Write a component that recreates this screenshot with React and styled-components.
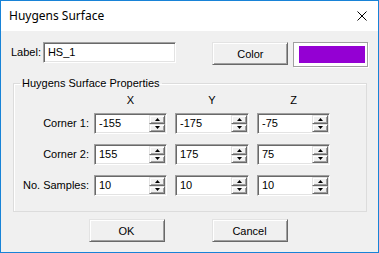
import React from 'react'
import styled, { createGlobalStyle } from 'styled-components'

const GlobalStyle = createGlobalStyle`
    html, body {
        margin: 0;
        padding: 0;
        background: #f0f0f0;
    }
    * {
        box-sizing: border-box;
    }
`

const rows = [
    { label: 'Corner 1:', values: ['-155', '-175', '-75'] },
    { label: 'Corner 2:', values: ['155', '175', '75'] },
    { label: 'No. Samples:', values: ['10', '10', '10'] },
]

function SpinBox(props) {
    return (
        <SpinFrame>
            <SpinText>{props.value}</SpinText>
            <SpinButtons>
                <SpinButton>
                    <svg width="5" height="3" viewBox="0 0 5 3">
                        <path d="M2.5 0 L5 3 L0 3 Z" fill="#000" />
                    </svg>
                </SpinButton>
                <SpinButton>
                    <svg width="5" height="3" viewBox="0 0 5 3">
                        <path d="M0 0 L5 0 L2.5 3 Z" fill="#000" />
                    </svg>
                </SpinButton>
            </SpinButtons>
        </SpinFrame>
    )
}

function App() {
    return (
        <Window>
            <GlobalStyle />
            <TitleBar>
                <Title>Huygens Surface</Title>
                <CloseButton>
                    <svg width="10" height="10" viewBox="0 0 10 10">
                        <path d="M0.5 0.5 L9.5 9.5 M9.5 0.5 L0.5 9.5" stroke="#000" strokeWidth="1" />
                    </svg>
                </CloseButton>
            </TitleBar>

            <Body>
                <TopRow>
                    <LabelText>Label:</LabelText>
                    <TextField>HS_1</TextField>
                    <ColorButton>Color</ColorButton>
                    <Swatch>
                        <SwatchFill color="#9400d3" />
                    </Swatch>
                </TopRow>

                <GroupBox>
                    <Legend>Huygens Surface Properties</Legend>
                    <Grid>
                        <span />
                        <ColHeader>X</ColHeader>
                        <ColHeader>Y</ColHeader>
                        <ColHeader>Z</ColHeader>
                        {rows.map(row => (
                            <React.Fragment key={row.label}>
                                <RowLabel>{row.label}</RowLabel>
                                {row.values.map((v, i) => (
                                    <SpinBox key={i} value={v} />
                                ))}
                            </React.Fragment>
                        ))}
                    </Grid>
                </GroupBox>

                <ButtonRow>
                    <PushButton>OK</PushButton>
                    <PushButton>Cancel</PushButton>
                </ButtonRow>
            </Body>
        </Window>
    )
}

export default App

const Window = styled.div`
    width: 379px;
    height: 253px;
    border: 1px solid #1883d7;
    background: #f0f0f0;
    display: flex;
    flex-direction: column;
    font-family: "Liberation Sans", Arial, sans-serif;
    font-size: 11px;
    color: #000;
`

const TitleBar = styled.div`
    height: 30px;
    background: #fff;
    display: flex;
    align-items: center;
    justify-content: space-between;
    padding: 0 11px 0 8px;
    flex-shrink: 0;
`

const Title = styled.div`
    font-family: "Noto Sans", "Open Sans", sans-serif;
    font-size: 12px;
    padding-bottom: 1px;
`

const CloseButton = styled.div`
    width: 10px;
    height: 10px;
    display: flex;
    svg { display: block; }
`

const Body = styled.div`
    flex: 1;
    padding: 11px 10px 0 10px;
    display: flex;
    flex-direction: column;
`

const TopRow = styled.div`
    display: flex;
    align-items: flex-start;
    height: 25px;
`

const LabelText = styled.div`
    width: 32px;
    height: 21px;
    line-height: 21px;
`

const sunken = `
    border-style: solid;
    border-width: 1px;
    border-color: #a0a0a0 #fff #fff #a0a0a0;
    box-shadow: inset 1px 1px 0 #696969, inset -1px -1px 0 #e3e3e3;
`

const raised = `
    border-style: solid;
    border-width: 1px;
    border-color: #e3e3e3 #696969 #696969 #e3e3e3;
    box-shadow: inset 1px 1px 0 #fff, inset -1px -1px 0 #a0a0a0;
    background: #f0f0f0;
`

const TextField = styled.div`
    ${sunken}
    width: 134px;
    height: 21px;
    background: #fff;
    padding: 0 4px;
    line-height: 19px;
`

const PushButton = styled.div`
    ${raised}
    width: 76px;
    height: 23px;
    display: flex;
    align-items: center;
    justify-content: center;
`

const ColorButton = styled(PushButton)`
    margin-left: 36px;
`

const Swatch = styled.div`
    margin-left: 5px;
    width: 75px;
    height: 25px;
    border: 1px solid #a0a0a0;
    box-shadow: 1px 1px 0 #fff;
    background: #fff;
    padding: 3px 2px 3px 5px;
`

const SwatchFill = styled.div`
    width: 100%;
    height: 100%;
    background: ${props => props.color};
`

const GroupBox = styled.fieldset`
    margin: 10px 1px 0 2px;
    padding: 0 0 15px 0;
    border: 1px solid #dcdcdc;
    box-shadow: inset 1px 1px 0 #fff;
    min-width: 0;
`

const Legend = styled.legend`
    margin-left: 6px;
    padding: 0 2px;
    line-height: 13px;
`

const Grid = styled.div`
    display: grid;
    grid-template-columns: 72px 73px 74px 73px;
    grid-template-rows: 13px 21px 21px 21px;
    column-gap: 8px;
    row-gap: 10px;
`

const ColHeader = styled.div`
    text-align: center;
    line-height: 13px;
    padding-top: 4px;
`

const RowLabel = styled.div`
    text-align: right;
    margin-right: -3px;
    line-height: 21px;
    white-space: nowrap;
`

const SpinFrame = styled.div`
    ${sunken}
    background: #fff;
    display: flex;
    align-items: stretch;
    padding: 1px;
`

const SpinText = styled.div`
    flex: 1;
    padding-left: 3px;
    line-height: 17px;
`

const SpinButtons = styled.div`
    width: 16px;
    display: flex;
    flex-direction: column;
`

const SpinButton = styled.div`
    ${raised}
    flex: 1;
    display: flex;
    align-items: center;
    justify-content: center;
    svg { display: block; }
`

const ButtonRow = styled.div`
    display: flex;
    justify-content: center;
    gap: 47px;
    margin-top: 7px;
    padding-right: 3px;
`
